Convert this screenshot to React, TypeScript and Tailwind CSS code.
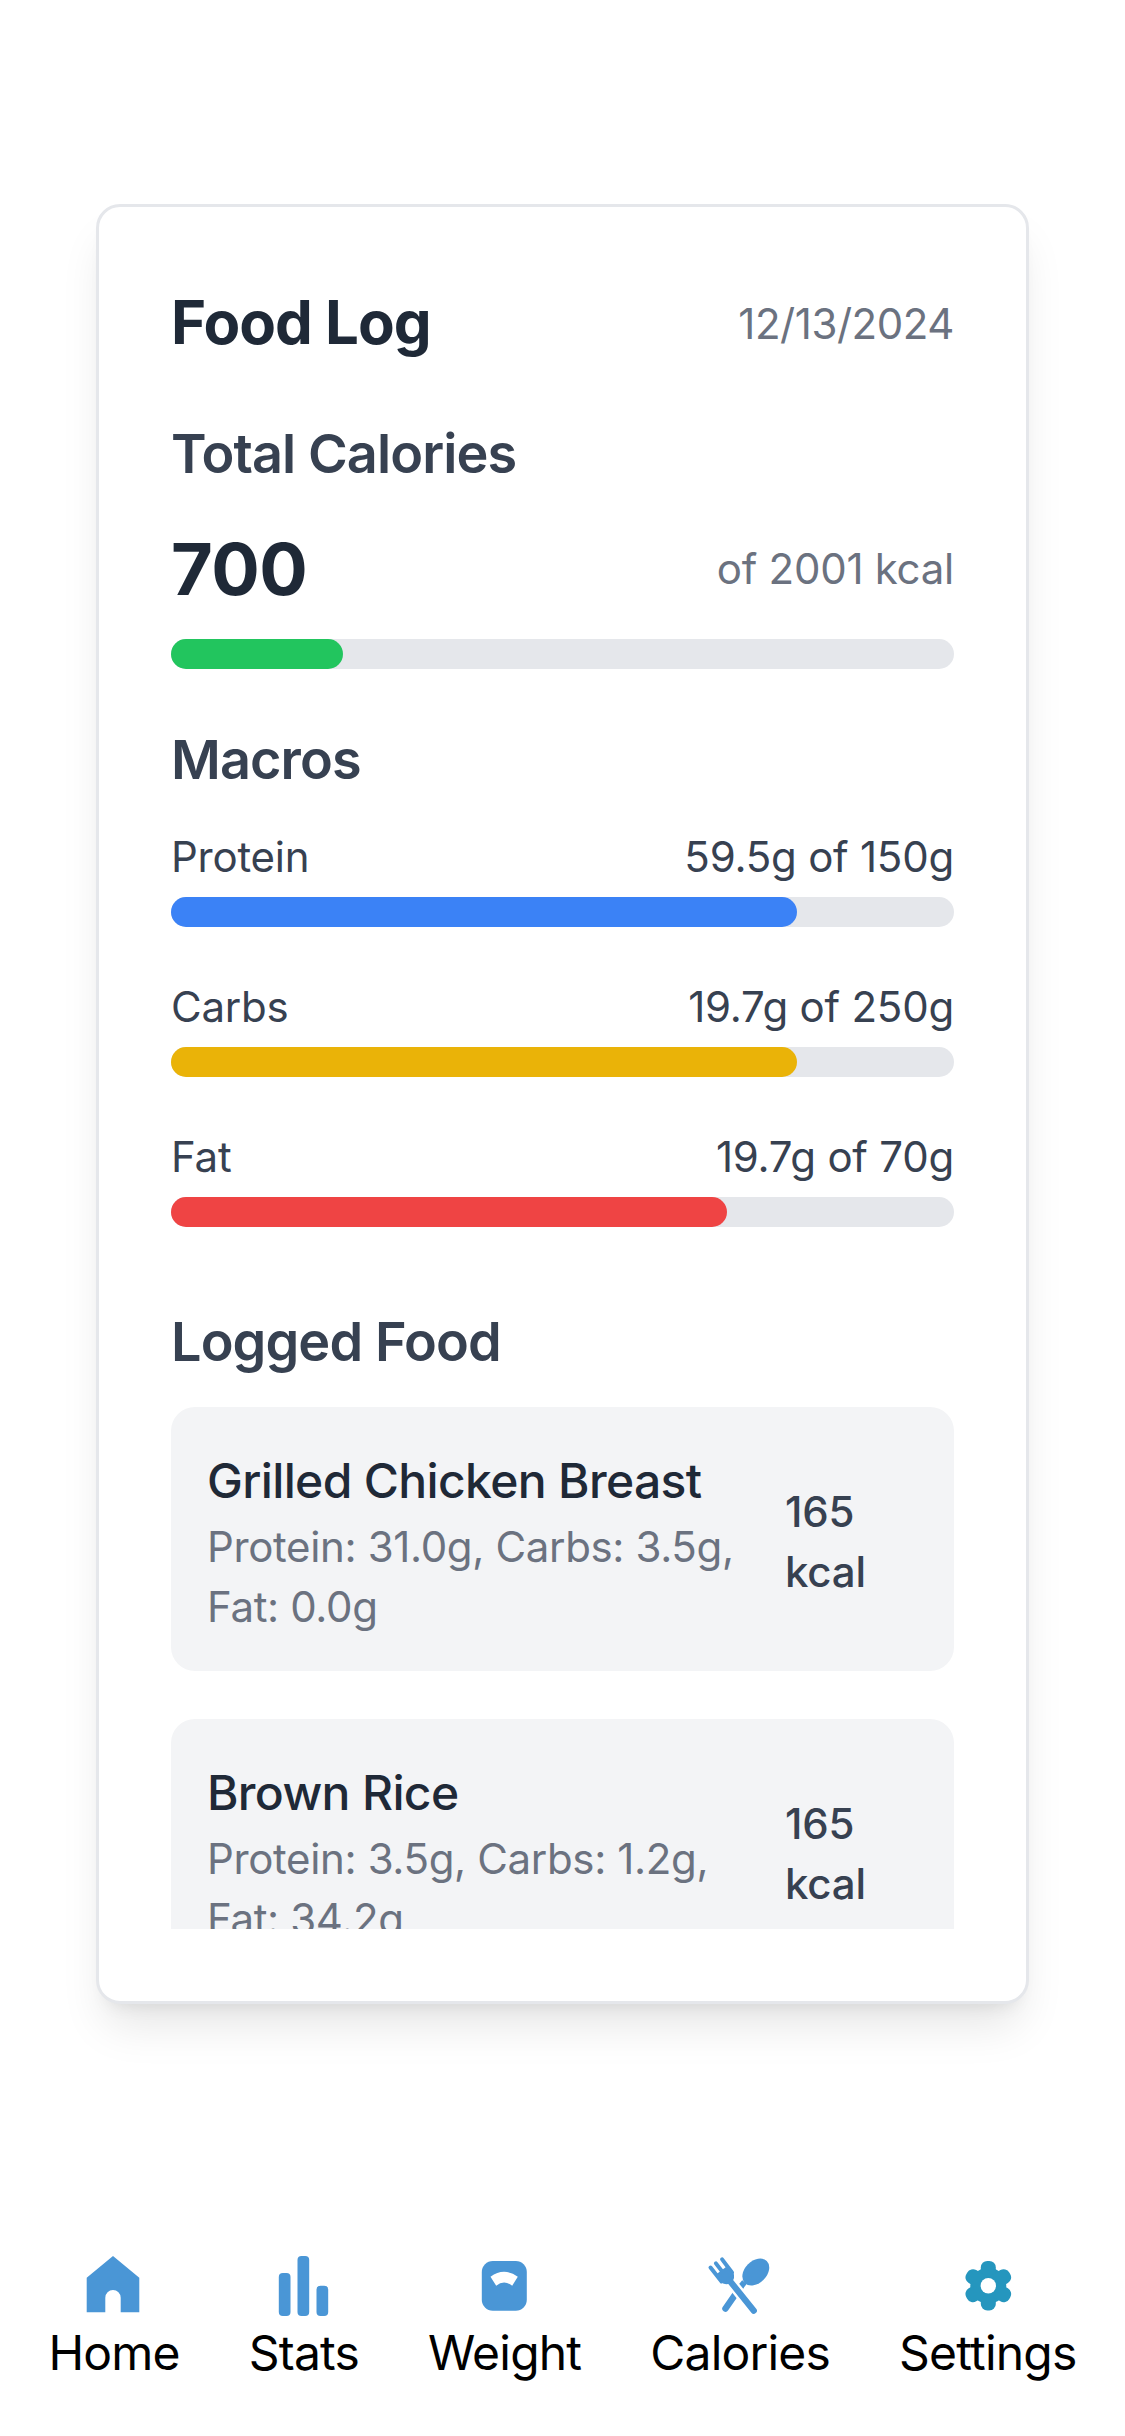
import React from 'react';

const macros = [
  { name: 'Protein', value: '59.5g of 150g', width: 'w-[80%]', color: 'bg-[#3b82f6]' },
  { name: 'Carbs', value: '19.7g of 250g', width: 'w-[80%]', color: 'bg-[#eab308]' },
  { name: 'Fat', value: '19.7g of 70g', width: 'w-[71%]', color: 'bg-[#ef4444]' },
];

const foods = [
  { name: 'Grilled Chicken Breast', detail: 'Protein: 31.0g, Carbs: 3.5g, Fat: 0.0g', kcal: '165 kcal' },
  { name: 'Brown Rice', detail: 'Protein: 3.5g, Carbs: 1.2g, Fat: 34.2g', kcal: '165 kcal' },
];

const blue = '#4a96d6';

const HomeIcon = () => (
  <svg width="72" height="72" viewBox="8 0 72 72" fill={blue}>
    <path d="M43 6 L69.3 27.7 V62.3 H50.7 V47.7 a7.7 7.7 0 0 0 -15.4 0 V62.3 H16.7 V27.7 Z" />
  </svg>
);

const StatsIcon = () => (
  <svg width="72" height="72" viewBox="7.5 0 72 72" fill={blue}>
    <rect x="18.3" y="23" width="11.7" height="43" rx="4" />
    <rect x="37" y="6" width="11.7" height="60" rx="4" />
    <rect x="56" y="35.7" width="11.7" height="30.3" rx="4" />
  </svg>
);

const WeightIcon = () => (
  <svg width="72" height="72" viewBox="9.5 0 72 72">
    <rect x="22.3" y="11" width="45" height="49.7" rx="11" fill={blue} />
    <path d="M31 26.7 Q44.5 17 58.3 26.7 L52.7 35.7 Q44.5 29.5 36.7 35.7 Z" fill="#fff" />
  </svg>
);

const CaloriesIcon = () => (
  <svg width="72" height="72" viewBox="9.5 0 72 72" fill="none" strokeLinecap="round">
    {/* spoon */}
    <ellipse cx="61.3" cy="22" rx="15.5" ry="11" transform="rotate(-45 61.3 22)" fill={blue} />
    <path d="M50 32 L46 37" stroke={blue} strokeWidth="6" strokeLinecap="butt" />
    <path d="M46 37 L31 58.5" stroke={blue} strokeWidth="6.5" />
    {/* gap where the fork crosses the spoon */}
    <path d="M36 31.7 L59.3 60.7" stroke="#fff" strokeWidth="11" strokeLinecap="butt" />
    {/* fork */}
    <path d="M36 31.7 L59.3 60.7" stroke={blue} strokeWidth="6.2" />
    <path d="M16 17.6 L27 31.5 M21.4 13.4 L31.5 26.5 M27.6 9.4 L37.5 22.5" stroke={blue} strokeWidth="4" />
    <path d="M21.5 24.5 L33.5 15.5 L39 23 Q41 28 37 32.5 Q33.5 35.5 28.5 33.5 Z" fill={blue} />
  </svg>
);

const SettingsIcon = () => (
  <svg width="72" height="72" viewBox="9 0 72 72" fill="#2596be">
    <circle cx="45.3" cy="35.7" r="18" />
    <rect x="37.8" y="10.9" width="15" height="49.6" rx="6.5" />
    <rect x="37.8" y="10.9" width="15" height="49.6" rx="6.5" transform="rotate(60 45.3 35.7)" />
    <rect x="37.8" y="10.9" width="15" height="49.6" rx="6.5" transform="rotate(120 45.3 35.7)" />
    <circle cx="45.3" cy="35.7" r="7.7" fill="#fff" />
  </svg>
);

const tabs = [
  { label: 'Home', icon: <HomeIcon /> },
  { label: 'Stats', icon: <StatsIcon /> },
  { label: 'Weight', icon: <WeightIcon /> },
  { label: 'Calories', icon: <CaloriesIcon /> },
  { label: 'Settings', icon: <SettingsIcon /> },
];

const App: React.FC = () => {
  return (
    <div className="flex h-[2436px] flex-col overflow-hidden bg-white font-['Inter',sans-serif]">
      <div className="mx-[96px] mt-[204px] h-[1800px] rounded-[24px] border-[3px] border-[#e5e7eb] bg-white p-[72px] shadow-[0_30px_45px_-9px_rgba(0,0,0,0.1),0_12px_18px_-12px_rgba(0,0,0,0.1)]">
        <div className="h-full overflow-hidden">
          <div className="mb-[48px] flex items-center justify-between">
            <h1 className="pt-[2px] text-[60px] leading-[82px] font-bold tracking-[-1px] text-[#1f2937]">Food Log</h1>
            <span className="pt-[6px] text-[42px] leading-[54px] tracking-[-0.45px] text-[#6b7280]">12/13/2024</span>
          </div>

          <h2 className="mb-[24px] pt-[2px] text-[54px] leading-[82px] font-semibold tracking-[-0.9px] text-[#374151]">Total Calories</h2>
          <div className="mb-[24px] flex items-center justify-between">
            <span className="pt-[4px] text-[72px] leading-[92px] font-bold tracking-[-0.5px] text-[#1f2937]">700</span>
            <span className="pt-[3px] text-[42px] leading-[57px] tracking-[-0.26px] text-[#6b7280]">of 2001 kcal</span>
          </div>
          <div className="mb-[48px] h-[30px] rounded-full bg-[#e5e7eb]">
            <div className="h-full w-[22%] rounded-full bg-[#22c55e]" />
          </div>

          <h2 className="mb-[24px] pt-[2px] text-[54px] leading-[82px] font-semibold tracking-[-0.9px] text-[#374151]">Macros</h2>
          <div className="mb-[72px] flex flex-col gap-[48px]">
            {macros.map((macro) => (
              <div key={macro.name}>
                <div className="mb-[12px] flex justify-between pt-[4px] text-[42px] leading-[56px] tracking-[-0.22px] text-[#374151]">
                  <span>{macro.name}</span>
                  <span>{macro.value}</span>
                </div>
                <div className="h-[30px] rounded-full bg-[#e5e7eb]">
                  <div className={`h-full rounded-full ${macro.width} ${macro.color}`} />
                </div>
              </div>
            ))}
          </div>

          <h2 className="mb-[24px] pt-[2px] text-[54px] leading-[82px] font-semibold tracking-[-0.9px] text-[#374151]">Logged Food</h2>
          <div className="flex flex-col gap-[48px]">
            {foods.map((food) => (
              <div key={food.name} className="flex items-center rounded-[24px] bg-[#f3f4f6] p-[36px]">
                <div className="flex-1 pt-[2px]">
                  <p className="text-[48px] leading-[72px] font-medium tracking-[-0.65px] text-[#1f2937]">{food.name}</p>
                  <p className="-mb-[2px] text-[42px] leading-[60px] tracking-[-0.35px] text-[#6b7280]">{food.detail}</p>
                </div>
                <div className="ml-[48px] w-[133px] pt-[6px] text-[42px] leading-[60px] font-medium tracking-[-0.2px] text-[#374151]">{food.kcal}</div>
              </div>
            ))}
          </div>
        </div>
      </div>

      <nav className="mt-auto flex justify-around px-[14px] pb-[53px]">
        {tabs.map((tab) => (
          <div key={tab.label} className="flex flex-col items-center">
            {tab.icon}
            <span className="pt-[1px] text-[48px] leading-[60px] tracking-[-0.8px] text-black">{tab.label}</span>
          </div>
        ))}
      </nav>
    </div>
  );
};

export default App;
